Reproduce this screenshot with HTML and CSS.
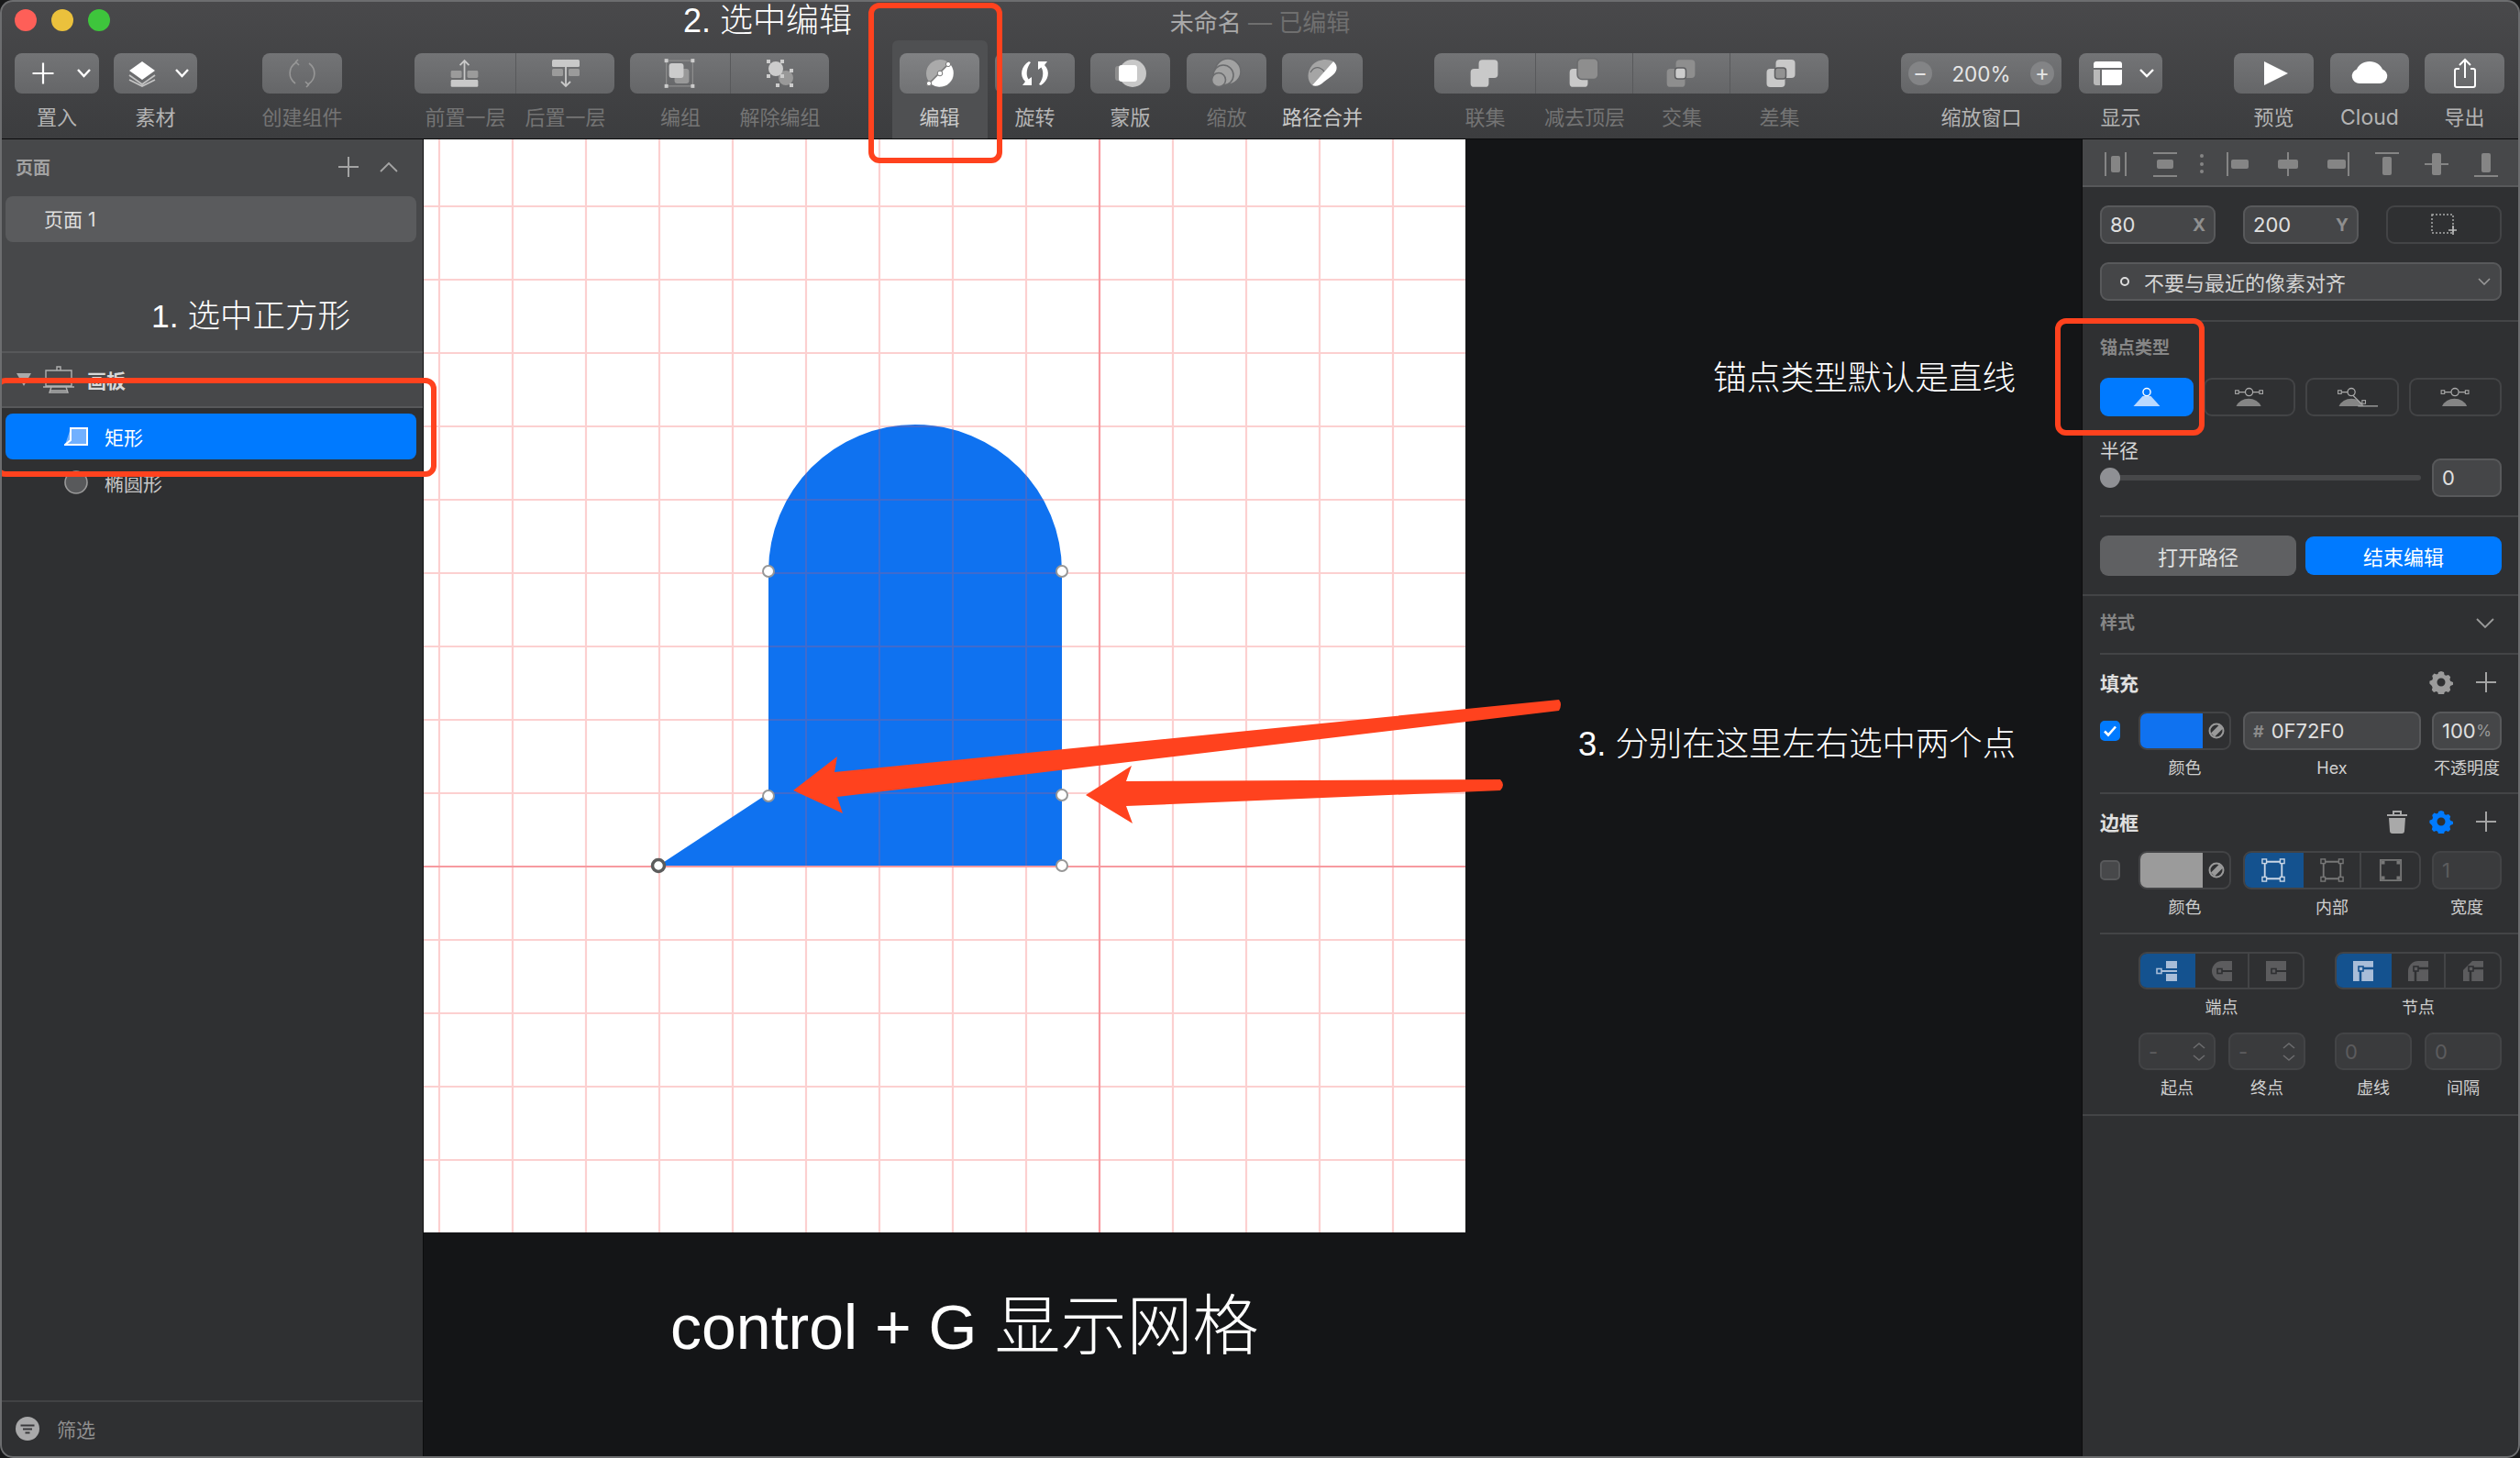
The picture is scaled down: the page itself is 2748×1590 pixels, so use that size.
FILE: index.html
```html
<!DOCTYPE html>
<html lang="zh-CN">
<head>
<meta charset="utf-8">
<title>未命名</title>
<link rel="stylesheet" href="styles.css">
</head>
<body>
<svg class="defs" aria-hidden="true">
  <symbol id="plus" viewBox="0 0 24 24"><path d="M12 1v22M1 12h22" fill="none" stroke="currentColor" stroke-width="2"/></symbol>
  <symbol id="gear" viewBox="0 0 26 26"><g fill="currentColor"><path fill-rule="evenodd" d="M13 1l3 1 .6 2.9 1.6.9 2.8-.9 2.2 2.4-.8 2.7.7 1.7 2.9 1.3v2.8l-2.9 1.3-.7 1.7.8 2.7-2.2 2.4-2.8-.9-1.6.9-.6 2.9-3 1-3-1-.6-2.9-1.6-.9-2.8.9-2.2-2.4.8-2.7-.7-1.7L.4 14.5v-2.8l2.9-1.3.7-1.7-.8-2.7 2.2-2.4 2.8.9 1.6-.9L10 2zM13 8.500a4.500 4.500 0 1 0 0 9 4.500 4.500 0 0 0 0-9z"/></g></symbol>
  <symbol id="swap" viewBox="0 0 20 20"><circle cx="10" cy="10" r="7.500" fill="none" stroke="#9a9a9a" stroke-width="2"/><path d="M4 12.500 13 3.500 17 7.500 8 16.500z" fill="#9a9a9a"/></symbol>
  <clipPath id="shape-clip"><path d="M718 944 838 865V623A160 160 0 0 1 1158 623V944Z"/></clipPath>
</svg>

<div class="window">
  <header class="toolbar">
    <div class="titlebar">
      <div class="lights"><span class="light red"></span><span class="light yellow"></span><span class="light green"></span></div>
      <div class="doc-title">未命名 <span class="doc-state">— 已编辑</span></div>
      <div></div>
    </div>
    <div class="tools">
      <div class="tool t-place"><div class="btn"><svg viewBox="0 0 92 44"><path d="M31 10.500v23M19.500 22h23" stroke="#fff" stroke-width="2.200" fill="none"/><path d="M69 18l6.500 7 6.500-7" stroke="#fff" stroke-width="2.400" fill="none"/></svg></div><span class="lbl on">置入</span></div>
      <div class="tool t-asset"><div class="btn"><svg viewBox="0 0 91 44"><path d="M31 9l14 10-14 10-14-10z" fill="#fff"/><path d="M17 24l14 10 14-10M17 29l14 7 14-7" stroke="#c4c4c4" stroke-width="1.800" fill="none"/><path d="M68 18l6.500 7 6.500-7" stroke="#fff" stroke-width="2.400" fill="none"/></svg></div><span class="lbl on">素材</span></div>
      <div class="tool t-create"><div class="btn"><svg viewBox="0 0 87 44"><g fill="none" stroke="#979797" stroke-width="1.600"><path d="M36 33C28 27 28 16 37 10M36 10l3-3M37 10l3 3"/><path d="M51 11C59 17 59 28 50 34M51 34l-3 3M50 34l-3-3"/></g></svg></div><span class="lbl off">创建组件</span></div>

      <div class="tool t-front seg-l"><div class="btn"><svg viewBox="0 0 111 44"><path d="M55 29V8M50 13l5-5 5 5" stroke="#c9c9c9" stroke-width="1.800" fill="none"/><rect x="40" y="19" width="12" height="8" rx="1.500" fill="#9b9b9b"/><rect x="58" y="19" width="12" height="8" rx="1.500" fill="#9b9b9b"/><rect x="40" y="29" width="30" height="8" rx="1.500" fill="#c9c9c9"/></svg></div><span class="lbl off">前置一层</span></div>
      <div class="tool t-back seg-r"><div class="btn"><svg viewBox="0 0 107 44"><rect x="39" y="7" width="30" height="8" rx="1.500" fill="#c9c9c9"/><rect x="39" y="17" width="12" height="8" rx="1.500" fill="#9b9b9b"/><rect x="57" y="17" width="12" height="8" rx="1.500" fill="#9b9b9b"/><path d="M54 15v21M49 31l5 5 5-5" stroke="#c9c9c9" stroke-width="1.800" fill="none"/></svg></div><span class="lbl off">后置一层</span></div>

      <div class="tool t-group seg-l"><div class="btn"><svg viewBox="0 0 110 44"><rect x="40" y="8" width="29" height="28" fill="none" stroke="#8f8f8f" stroke-width="1.200"/><rect x="49" y="17" width="16" height="16" rx="3" fill="#999"/><rect x="43" y="11" width="16" height="16" rx="3" fill="#ccc"/><g fill="#ccc"><rect x="38" y="6" width="4" height="4"/><rect x="67" y="6" width="4" height="4"/><rect x="38" y="34" width="4" height="4"/><rect x="67" y="34" width="4" height="4"/></g></svg></div><span class="lbl off">编组</span></div>
      <div class="tool t-ungroup seg-r"><div class="btn"><svg viewBox="0 0 107 44"><circle cx="60" cy="27" r="8" fill="#999"/><circle cx="49" cy="17" r="8" fill="#ccc"/><g fill="#ccc"><rect x="39" y="7" width="4" height="4"/><rect x="54" y="7" width="4" height="4"/><rect x="39" y="23" width="4" height="4"/><rect x="54" y="23" width="4" height="4"/><rect x="64" y="17" width="4" height="4"/><rect x="49" y="33" width="4" height="4"/><rect x="64" y="33" width="4" height="4"/></g></svg></div><span class="lbl off">解除编组</span></div>

      <div class="tool t-edit"><div class="btn btn-lit"><svg viewBox="0 0 87 44"><circle cx="44" cy="22" r="15" fill="#aaa"/><path d="M54.600 11.400A15 15 0 0 1 33.400 32.600z" fill="#fff"/><path d="M32 33 53 12" stroke="#777" stroke-width="1.400"/><g fill="#fff" stroke="#777"><circle cx="32" cy="33" r="2.600"/><circle cx="53" cy="12" r="2.600"/><circle cx="44" cy="22" r="2.800"/></g></svg></div><span class="lbl bright">编辑</span></div>
      <div class="tool t-rotate"><div class="btn"><svg viewBox="0 0 87 44"><g fill="#fff"><path d="M37 9C29 14 26 24 33 31L30 35H40V26L36.500 28.500C33 23 35 15 39 10z"/><path d="M50 35C58 30 61 20 54 13L57 9H47V18L50.500 15.500C54 21 52 29 48 34z"/></g></svg></div><span class="lbl on">旋转</span></div>
      <div class="tool t-mask"><div class="btn"><svg viewBox="0 0 87 44"><rect x="27" y="14" width="14" height="16" rx="3" fill="#8e8e8e"/><circle cx="46" cy="22" r="15" fill="#c8c8c8"/><rect x="31" y="13" width="20" height="18" rx="3" fill="#fff"/></svg></div><span class="lbl on">蒙版</span></div>
      <div class="tool t-scale"><div class="btn"><svg viewBox="0 0 87 44"><g fill="#a2a2a2" stroke="#6a6b6d" stroke-width="1.600"><circle cx="45" cy="20" r="14"/><circle cx="40" cy="24" r="11"/><circle cx="35" cy="29" r="7.500"/></g></svg></div><span class="lbl off">缩放</span></div>
      <div class="tool t-merge"><div class="btn"><svg viewBox="0 0 88 44"><path d="M33 35C27 30 27 20 33 13 38 7 49 5 56 9z" fill="#a5a5a5"/><path d="M33 35 56 9C62 14 60 21 54 25L46 31C42 35 37 37 33 35z" fill="#fff"/><path d="M31 21C35 14 41 14 46 20" fill="none" stroke="#6a6b6d" stroke-width="1.200"/></svg></div><span class="lbl bright">路径合并</span></div>

      <div class="tool t-union seg-l"><div class="btn"><svg viewBox="0 0 111 44"><rect x="49" y="7" width="21" height="20" rx="4" fill="#c9c9c9"/><rect x="40" y="17" width="20" height="20" rx="4" fill="#c9c9c9"/></svg></div><span class="lbl off">联集</span></div>
      <div class="tool t-subtract seg-m"><div class="btn"><svg viewBox="0 0 106 44"><rect x="37" y="17" width="20" height="20" rx="4" fill="#c9c9c9"/><rect x="45.500" y="5.500" width="23" height="23" rx="5" fill="#8e8e8e" stroke="#6a6b6d" stroke-width="1.500"/></svg></div><span class="lbl off">减去顶层</span></div>
      <div class="tool t-intersect seg-m"><div class="btn"><svg viewBox="0 0 106 44"><rect x="47" y="7" width="21" height="20" rx="4" fill="#8e8e8e"/><rect x="37" y="17" width="20" height="20" rx="4" fill="#8e8e8e"/><rect x="46" y="16" width="12" height="12" rx="3" fill="#ccc" stroke="#5d5e60" stroke-width="1.500"/></svg></div><span class="lbl off">交集</span></div>
      <div class="tool t-difference seg-r"><div class="btn"><svg viewBox="0 0 106 44"><rect x="49" y="7" width="21" height="20" rx="4" fill="#c9c9c9"/><rect x="39" y="17" width="20" height="20" rx="4" fill="#c9c9c9"/><rect x="48" y="16" width="12" height="12" rx="3" fill="#929292" stroke="#5d5e60" stroke-width="1.500"/></svg></div><span class="lbl off">差集</span></div>

      <div class="tool t-zoom"><div class="btn zoom-btn"><span class="zoom-round">−</span><span class="zoom-val">200%</span><span class="zoom-round">+</span></div><span class="lbl on">缩放窗口</span></div>
      <div class="tool t-show"><div class="btn"><svg viewBox="0 0 91 44"><path d="M16 12a3 3 0 0 1 3-3h25a3 3 0 0 1 3 3v4H16z" fill="#fff"/><path d="M16 18h7v17h-4a3 3 0 0 1-3-3z" fill="#b9b9b9"/><path d="M25 18h22v14a3 3 0 0 1-3 3H25z" fill="#fff"/><path d="M67 18l7 7 7-7" stroke="#fff" stroke-width="2.400" fill="none"/></svg></div><span class="lbl on">显示</span></div>
      <div class="tool t-preview"><div class="btn"><svg viewBox="0 0 87 44"><path d="M33 9l26 13-26 13z" fill="#fff"/></svg></div><span class="lbl on">预览</span></div>
      <div class="tool t-cloud"><div class="btn"><svg viewBox="0 0 86 44"><path d="M32 33a8 8 0 0 1-3-15.500C31 13 36 9 43 9s12 4 14 8.500A8 8 0 0 1 54 33z" fill="#fff"/></svg></div><span class="lbl on latin">Cloud</span></div>
      <div class="tool t-export"><div class="btn"><svg viewBox="0 0 87 44"><path d="M38 17h-3a2 2 0 0 0-2 2v16a2 2 0 0 0 2 2h18a2 2 0 0 0 2-2V19a2 2 0 0 0-2-2h-3M44 27V7M38 13l6-6 6 6" fill="none" stroke="#fff" stroke-width="2"/></svg></div><span class="lbl on">导出</span></div>
    </div>
  </header>

  <main class="workspace">
    <aside class="layers">
      <div class="pages">
        <div class="pages-head"><span class="section-name">页面</span>
          <div class="pages-actions"><svg class="ic-plus"><use href="#plus"/></svg><svg class="ic-up" viewBox="0 0 20 12"><path d="M1 11l9-9 9 9" fill="none" stroke="currentColor" stroke-width="1.800"/></svg></div>
        </div>
        <div class="page-row">页面 1</div>
      </div>
      <div class="artboard-row">
        <svg class="caret" viewBox="0 0 16 14"><path d="M0 0h16L8 14z" fill="#aaa"/></svg>
        <svg class="board-ic" viewBox="0 0 34 30"><path d="M3 5h28v17H3zM15 5V1h4v4M0 23h34M9 23l-2 6h20l-2-6M8 27h18" fill="none" stroke="#b0b0b0" stroke-width="1.400"/></svg>
        <span class="board-name">画板</span>
      </div>
      <div class="layer-list">
        <div class="layer layer-on">
          <svg class="layer-ic" viewBox="0 0 26 20"><path d="M7 1h18v18H1z" fill="#71b0ff"/><path d="M1 19h24V1H7v13L1 19z" fill="none" stroke="#fff" stroke-width="2"/></svg>
          <span>矩形</span>
        </div>
        <div class="layer">
          <svg class="layer-ic layer-ic-round" viewBox="0 0 26 26"><circle cx="13" cy="13" r="12" fill="#58595b" stroke="#9a9a9a" stroke-width="1.600"/></svg>
          <span class="layer-name">椭圆形</span>
        </div>
      </div>
      <div class="layers-foot">
        <svg class="filter-ic" viewBox="0 0 26 26"><circle cx="13" cy="13" r="13" fill="#a9a9aa"/><path d="M5.500 9.500h15M8 13.500h10M10.500 17.500h5" stroke="#3a3a3c" stroke-width="2"/></svg>
        <span>筛选</span>
      </div>
    </aside>

    <section class="stage">
      <svg class="artboard" viewBox="462 152 1136 1192">
        <rect x="462" y="152" width="1136" height="1192" fill="#fff"/>
        <path class="grid-line" d="M479 152V1344M559 152V1344M639 152V1344M719 152V1344M799 152V1344M879 152V1344M959 152V1344M1039 152V1344M1119 152V1344M1279 152V1344M1359 152V1344M1439 152V1344M1519 152V1344M462 225H1598M462 305H1598M462 385H1598M462 465H1598M462 545H1598M462 625H1598M462 705H1598M462 785H1598M462 865H1598M462 1025H1598M462 1105H1598M462 1185H1598M462 1265H1598"/>
        <path class="grid-main" d="M1199 152V1344M462 945H1598"/>
        <path d="M718 944 838 865V623A160 160 0 0 1 1158 623V944Z" fill="#0f72f0"/>
        <path class="grid-over" clip-path="url(#shape-clip)" d="M879 152V1344M959 152V1344M1039 152V1344M1119 152V1344M462 465H1598M462 545H1598M462 625H1598M462 705H1598M462 785H1598M462 865H1598"/>
        <g class="handle"><ellipse cx="838" cy="623" rx="6" ry="6"/><ellipse cx="1158" cy="623" rx="6" ry="6"/><ellipse cx="838" cy="868" rx="6" ry="6"/><ellipse cx="1158" cy="867" rx="6" ry="6"/><ellipse cx="1158" cy="944" rx="6" ry="6"/></g>
        <circle class="handle-on" cx="718" cy="944" r="6.500"/>
      </svg>
      <p class="caption">control + G <span class="caption-cjk">显示网格</span></p>
    </section>

    <aside class="inspector">
      <div class="align-bar">
        <svg viewBox="0 0 478 51"><g fill="#858585">
          <rect x="25" y="14" width="2" height="26"/><rect x="47" y="14" width="2" height="26"/><rect x="32" y="18" width="10" height="18" rx="2"/>
          <rect x="78" y="14" width="26" height="2"/><rect x="78" y="39" width="26" height="2"/><rect x="82" y="22" width="18" height="10" rx="2"/>
          <circle cx="131" cy="18" r="2"/><circle cx="131" cy="27" r="2"/><circle cx="131" cy="35" r="2"/>
          <rect x="158" y="14" width="2" height="26"/><rect x="163" y="22" width="19" height="10" rx="2"/>
          <rect x="224" y="14" width="2" height="26"/><rect x="214" y="22" width="22" height="10" rx="2"/>
          <rect x="290" y="14" width="2" height="26"/><rect x="268" y="22" width="20" height="10" rx="2"/>
          <rect x="320" y="14" width="26" height="2"/><rect x="328" y="19" width="10" height="20" rx="2"/>
          <rect x="374" y="26" width="26" height="2"/><rect x="382" y="15" width="10" height="24" rx="2"/>
          <rect x="428" y="39" width="26" height="2"/><rect x="436" y="15" width="10" height="21" rx="2"/>
        </g></svg>
      </div>
      <div class="insp-body">
        <div class="xy-row">
          <div class="field"><span class="val">80</span><span class="unit">X</span></div>
          <div class="field"><span class="val">200</span><span class="unit">Y</span></div>
          <div class="field field-ghost"><svg class="pixel-ic" viewBox="0 0 28 24"><rect x="1" y="1" width="23" height="20" fill="none" stroke="#aaa" stroke-width="1.500" stroke-dasharray="2 2"/><path d="M24 13v10M19 18h9" stroke="#bbb" stroke-width="1.600"/></svg></div>
        </div>
        <div class="select"><span class="sel-dot"></span><span class="sel-text">不要与最近的像素对齐</span><svg class="sel-chev" viewBox="0 0 14 8"><path d="M1 1l6 6 6-6" fill="none" stroke="#999" stroke-width="1.600"/></svg></div>
        <div class="rule after-select"></div>
        <div class="insp-title anchor-title">锚点类型</div>
        <div class="anchor-row">
          <div class="anchor anchor-on"><svg viewBox="0 0 102 42"><circle cx="51" cy="15" r="4.500" fill="none" stroke="#fff" stroke-width="1.600"/><path d="M35 32l11-12h10l11 12z" fill="#b9d9ff"/></svg></div>
          <div class="anchor"><svg viewBox="0 0 100 42"><path d="M34 32a16 14 0 0 1 30 0z" fill="#858585"/><path d="M37 15h8M54 15h8" stroke="#aaa" stroke-width="1.400"/><circle cx="49.500" cy="15" r="4.500" fill="#2f3032" stroke="#aaa" stroke-width="1.400"/><rect x="33" y="13" width="4" height="4" fill="none" stroke="#aaa" stroke-width="1.200"/><rect x="62" y="13" width="4" height="4" fill="none" stroke="#aaa" stroke-width="1.200"/></svg></div>
          <div class="anchor"><svg viewBox="0 0 102 42"><path d="M35 32a16 14 0 0 1 30 0z" fill="#858585"/><path d="M38 15h8M52 19l11 11M58 32h24" stroke="#aaa" stroke-width="1.400"/><circle cx="50" cy="15" r="4.500" fill="#2f3032" stroke="#aaa" stroke-width="1.400"/><rect x="34" y="13" width="4" height="4" fill="none" stroke="#aaa" stroke-width="1.200"/><rect x="63" y="25" width="4" height="4" fill="none" stroke="#aaa" stroke-width="1.200"/></svg></div>
          <div class="anchor"><svg viewBox="0 0 102 42"><path d="M35 32a16 14 0 0 1 30 0z" fill="#858585"/><path d="M38 15h8M55 15h8" stroke="#aaa" stroke-width="1.400"/><circle cx="50.500" cy="15" r="4.500" fill="#2f3032" stroke="#aaa" stroke-width="1.400"/><rect x="34" y="13" width="4" height="4" fill="none" stroke="#aaa" stroke-width="1.200"/><rect x="63" y="13" width="4" height="4" fill="none" stroke="#aaa" stroke-width="1.200"/></svg></div>
        </div>
        <div class="radius-title">半径</div>
        <div class="slider-row">
          <div class="slider"><span class="slider-thumb"></span></div>
          <div class="field field-num"><span class="val">0</span></div>
        </div>
        <div class="rule after-slider"></div>
        <div class="action-row"><div class="action action-gray">打开路径</div><div class="action action-blue">结束编辑</div></div>
      </div>
      <div class="rule-full"></div>
      <div class="insp-body">
        <div class="style-head"><span class="insp-title">样式</span><svg class="style-chev" viewBox="0 0 20 12"><path d="M1 1l9 9 9-9" fill="none" stroke="#9a9a9a" stroke-width="1.800"/></svg></div>
        <div class="rule"></div>

        <div class="prop-head"><span class="prop-title">填充</span><div class="prop-actions"><svg class="ic-gear"><use href="#gear"/></svg><svg class="ic-plus"><use href="#plus"/></svg></div></div>
        <div class="prop-grid">
          <span class="check check-on"><svg viewBox="0 0 22 22"><path d="M5 11.500l4 4 8-9" fill="none" stroke="#fff" stroke-width="2.600"/></svg></span>
          <div class="swatch"><span class="swatch-color swatch-blue"></span><svg class="swap"><use href="#swap"/></svg></div>
          <div class="field field-hex"><span class="hash">#</span><span class="val">0F72F0</span></div>
          <div class="field field-num"><span class="val">100</span><span class="pct">%</span></div>
          <span></span><span class="cap cap-a">颜色</span><span class="cap cap-b latin">Hex</span><span class="cap cap-c">不透明度</span>
        </div>
        <div class="rule after-fill"></div>

        <div class="prop-head"><span class="prop-title">边框</span><div class="prop-actions"><svg class="ic-trash" viewBox="0 0 22 26"><path d="M0 6h22" stroke="#a9a9a9" stroke-width="2"/><path d="M7 5V2h8v3" fill="none" stroke="#a9a9a9" stroke-width="2"/><path d="M2 9h18l-1 14a3 3 0 0 1-3 3H6a3 3 0 0 1-3-3z" fill="#a9a9a9"/></svg><svg class="ic-gear ic-blue"><use href="#gear"/></svg><svg class="ic-plus"><use href="#plus"/></svg></div></div>
        <div class="prop-grid">
          <span class="check"></span>
          <div class="swatch"><span class="swatch-color swatch-gray"></span><svg class="swap"><use href="#swap"/></svg></div>
          <div class="segs segs-pos">
            <span class="seg seg-on"><svg viewBox="0 0 28 28"><path d="M4 4h20v20H4z" fill="none" stroke="#c9d6e6" stroke-width="2"/><g fill="#14528f" stroke="#c9d6e6" stroke-width="1.500"><rect x="1" y="1" width="5" height="5"/><rect x="22" y="1" width="5" height="5"/><rect x="1" y="22" width="5" height="5"/><rect x="22" y="22" width="5" height="5"/></g></svg></span>
            <span class="seg"><svg viewBox="0 0 28 28"><path d="M4 4h20v20H4z" fill="none" stroke="#777" stroke-width="2"/><g fill="#2f3032" stroke="#777" stroke-width="1.500"><rect x="1" y="1" width="5" height="5"/><rect x="22" y="1" width="5" height="5"/><rect x="1" y="22" width="5" height="5"/><rect x="22" y="22" width="5" height="5"/></g></svg></span>
            <span class="seg"><svg viewBox="0 0 28 28"><path d="M2 2h24v24H2z" fill="none" stroke="#777" stroke-width="2"/><g fill="#777"><rect x="3" y="3" width="4" height="4"/><rect x="21" y="3" width="4" height="4"/><rect x="3" y="21" width="4" height="4"/><rect x="21" y="21" width="4" height="4"/></g></svg></span>
          </div>
          <div class="field field-num field-off"><span class="val">1</span></div>
          <span></span><span class="cap cap-a">颜色</span><span class="cap cap-b">内部</span><span class="cap cap-c">宽度</span>
        </div>
        <div class="rule after-border"></div>

        <div class="line-row">
          <div>
            <div class="segs segs-ends">
              <span class="seg seg-on"><svg viewBox="0 0 24 24"><path d="M11 1h12v8H11zM11 15h12v8H11z" fill="#a8bdd8"/><path d="M5 12h18" stroke="#a8bdd8" stroke-width="2"/><rect x="1" y="9.500" width="5" height="5" fill="#14528f" stroke="#a8bdd8" stroke-width="1.600"/></svg></span>
              <span class="seg"><svg viewBox="0 0 24 24"><path d="M23 1H12a11 11 0 0 0 0 22h11z" fill="#5c5c5e"/><path d="M11 12h12" stroke="#2f3032" stroke-width="2"/><rect x="7" y="9.500" width="5" height="5" fill="#5c5c5e" stroke="#2f3032" stroke-width="1.600"/></svg></span>
              <span class="seg"><svg viewBox="0 0 24 24"><path d="M1 1h22v22H1z" fill="#5c5c5e"/><path d="M11 12h12" stroke="#2f3032" stroke-width="2"/><rect x="7" y="9.500" width="5" height="5" fill="#5c5c5e" stroke="#2f3032" stroke-width="1.600"/></svg></span>
            </div>
            <div class="cap cap-line">端点</div>
          </div>
          <div>
            <div class="segs segs-joins">
              <span class="seg seg-on"><svg viewBox="0 0 24 24"><path d="M1 1h22v22H1z" fill="#a8bdd8"/><path d="M11 9h12M9 12v11" stroke="#14528f" stroke-width="2.500"/><rect x="7" y="7" width="5" height="5" fill="#a8bdd8" stroke="#14528f" stroke-width="1.600"/></svg></span>
              <span class="seg"><svg viewBox="0 0 24 24"><path d="M1 23V12A11 11 0 0 1 12 1h11v22z" fill="#5c5c5e"/><path d="M11 9h12M9 12v11" stroke="#2f3032" stroke-width="2.500"/><rect x="7" y="7" width="5" height="5" fill="#5c5c5e" stroke="#2f3032" stroke-width="1.600"/></svg></span>
              <span class="seg"><svg viewBox="0 0 24 24"><path d="M1 23V11L11 1h12v22z" fill="#5c5c5e"/><path d="M11 9h12M9 12v11" stroke="#2f3032" stroke-width="2.500"/><rect x="7" y="7" width="5" height="5" fill="#5c5c5e" stroke="#2f3032" stroke-width="1.600"/></svg></span>
            </div>
            <div class="cap cap-line">节点</div>
          </div>
        </div>
        <div class="stepper-row">
          <div class="stepper-col"><div class="field field-off"><span class="val">-</span><svg class="updown" viewBox="0 0 14 22"><path d="M1 7l6-5 6 5M1 15l6 5 6-5" fill="none" stroke="#6c6c6e" stroke-width="1.600"/></svg></div><span class="cap">起点</span></div>
          <div class="stepper-col stepper-b"><div class="field field-off"><span class="val">-</span><svg class="updown" viewBox="0 0 14 22"><path d="M1 7l6-5 6 5M1 15l6 5 6-5" fill="none" stroke="#6c6c6e" stroke-width="1.600"/></svg></div><span class="cap">终点</span></div>
          <div class="stepper-col stepper-c"><div class="field field-off"><span class="val">0</span></div><span class="cap">虚线</span></div>
          <div class="stepper-col stepper-b"><div class="field field-off"><span class="val">0</span></div><span class="cap">间隔</span></div>
        </div>
      </div>
      <div class="rule-full rule-end"></div>
    </aside>
  </main>

  <div class="callout callout-1">1. 选中正方形</div>
  <div class="callout callout-2">2. 选中编辑</div>
  <div class="callout callout-3">3. 分别在这里左右选中两个点</div>
  <div class="callout callout-4">锚点类型默认是直线</div>
  <span class="mark mark-edit"></span>
  <span class="mark mark-layer"></span>
  <span class="mark mark-anchor"></span>
  <svg class="arrows" viewBox="0 0 2748 1590">
    <path d="M865 862 913 825 910 842 1700 763Q1704 768 1700 775L913 869 919 887Z" fill="#ff421e"/>
    <path d="M1184 867 1234 835 1228 852 1636 850Q1642 856 1636 862L1228 879 1235 898Z" fill="#ff421e"/>
  </svg>
</div>
</body>
</html>
```

FILE: styles.css
```css
* { box-sizing: border-box; }
html, body { margin: 0; padding: 0; }
body {
  width: 2748px;
  height: 1590px;
  overflow: hidden;
  background: #18191a;
  font-family: "Inter", "Noto Sans CJK SC", sans-serif;
  color: #d0d0d0;
}
.defs { position: absolute; width: 0; height: 0; }
.latin { font-family: "Inter", "Noto Sans", sans-serif; }

.window {
  position: relative;
  width: 2748px;
  height: 1590px;
  display: flex;
  flex-direction: column;
  border-radius: 14px;
  overflow: hidden;
}
.window::after {
  content: "";
  position: absolute;
  inset: 0;
  border: 2px solid #6c6d6f;
  border-radius: 14px;
  pointer-events: none;
}

/* toolbar */
.toolbar {
  height: 152px;
  flex: none;
  background: linear-gradient(#49494b, #3c3d3f);
  border-bottom: 1px solid #0c0c0d;
}
.titlebar {
  height: 44px;
  display: grid;
  grid-template-columns: 1fr auto 1fr;
  align-items: center;
}
.lights { display: flex; gap: 16px; padding-left: 16px; }
.light { width: 24px; height: 24px; border-radius: 50%; }
.red { background: #fe5f58; }
.yellow { background: #ebc13c; }
.green { background: #3ec53c; }
.doc-title { font-size: 26px; color: #a9a9a9; }
.doc-state { color: #6f6f6f; }
.tools { display: flex; height: 107px; }
.tool {
  flex: none;
  display: flex;
  flex-direction: column;
  align-items: center;
  padding-top: 14px;
}
.btn {
  width: 100%;
  height: 44px;
  flex: none;
  background: linear-gradient(#737476, #656668);
  border-radius: 8px;
}
.btn svg { display: block; width: 100%; height: 44px; }
.btn-lit { background: linear-gradient(#818284, #717274); }
.lbl { margin-top: 13px; line-height: 26px; font-size: 22px; white-space: nowrap; }
.lbl.on { color: #b4b4b4; }
.lbl.off { color: #747474; }
.lbl.bright { color: #c9c9c9; }
.lbl.latin { font-size: 23px; }
.seg-l .btn { border-radius: 8px 0 0 8px; border-right: 1px solid #58595b; }
.seg-m .btn { border-radius: 0; border-right: 1px solid #58595b; }
.seg-r .btn { border-radius: 0 8px 8px 0; }
.t-place { width: 92px; margin-left: 16px; }
.t-asset { width: 91px; margin-left: 16px; }
.t-create { width: 87px; margin-left: 71px; }
.t-front { width: 111px; margin-left: 79px; }
.t-back { width: 107px; }
.t-group { width: 110px; margin-left: 17px; }
.t-ungroup { width: 107px; }
.t-edit {
  width: 104px;
  margin-left: 69px;
  padding-left: 8px;
  padding-right: 9px;
  background: #4f5052;
  border-radius: 6px 6px 0 0;
}
.t-rotate { width: 87px; margin-left: 8px; }
.t-mask { width: 87px; margin-left: 17px; }
.t-scale { width: 87px; margin-left: 18px; }
.t-merge { width: 88px; margin-left: 17px; }
.t-union { width: 111px; margin-left: 78px; }
.t-subtract, .t-intersect, .t-difference { width: 106px; }
.t-difference { width: 107px; }
.t-zoom { width: 175px; margin-left: 79px; }
.t-show { width: 91px; margin-left: 19px; }
.t-preview { width: 87px; margin-left: 78px; }
.t-cloud { width: 86px; margin-left: 18px; }
.t-export { width: 87px; margin-left: 17px; }
.zoom-btn {
  display: flex;
  align-items: center;
  justify-content: space-between;
  padding: 0 8px;
}
.zoom-round {
  width: 26px;
  height: 26px;
  border-radius: 50%;
  background: #838486;
  color: #e4e4e4;
  font-size: 24px;
  line-height: 25px;
  text-align: center;
}
.zoom-val { font-size: 22.500px; color: #e6e6e6; }

/* workspace */
.workspace { flex: 1; min-height: 0; display: flex; }

/* layers */
.layers {
  width: 462px;
  flex: none;
  display: flex;
  flex-direction: column;
  background: #2f3032;
  border-right: 1px solid #0c0c0d;
}
.pages {
  height: 233px;
  padding: 0 7px 0 6px;
  background: #47484a;
  border-bottom: 2px solid #57585a;
}
.pages-head {
  height: 62px;
  padding: 0 20px 3px 11px;
  display: flex;
  align-items: center;
  justify-content: space-between;
}
.section-name { font-size: 19px; font-weight: 700; color: #a2a2a2; }
.pages-actions { display: flex; align-items: center; gap: 22px; color: #a4a4a4; }
.ic-plus { width: 24px; height: 24px; display: block; color: #a4a4a4; }
.ic-up { width: 20px; height: 12px; display: block; }
.page-row {
  height: 50px;
  padding-left: 42px;
  border-radius: 8px;
  background: #5a5b5d;
  font-size: 21px;
  line-height: 52px;
  color: #e0e0e0;
}
.artboard-row {
  height: 60px;
  display: flex;
  align-items: center;
  padding-left: 18px;
  background: #47484a;
  border-bottom: 2px solid #57585a;
}
.caret { width: 16px; height: 14px; flex: none; }
.board-ic { width: 34px; height: 30px; margin-left: 13px; flex: none; }
.board-name { margin-left: 14px; font-size: 21px; font-weight: 700; color: #d8d8d8; }
.layer-list { padding: 6px 7px 0 6px; }
.layer {
  height: 50px;
  display: flex;
  align-items: center;
  padding-left: 64px;
  font-size: 21px;
  color: #c8c8c8;
}
.layer-on { background: #007aff; border-radius: 8px; color: #fff; }
.layer-ic { width: 26px; height: 20px; margin-right: 18px; flex: none; }
.layer-ic-round { height: 26px; }
.layers-foot {
  margin-top: auto;
  height: 63px;
  display: flex;
  align-items: center;
  gap: 19px;
  padding: 0 0 4px 17px;
  border-top: 2px solid #414244;
  font-size: 21px;
  color: #8f8f8f;
}
.filter-ic { width: 26px; height: 26px; }

/* stage */
.stage { position: relative; flex: 1; background: #141517; overflow: hidden; }
.artboard { display: block; width: 1136px; height: 1192px; }
.grid-line { fill: none; stroke: #fcd0d0; stroke-width: 2.200; }
.grid-main { fill: none; stroke: #f79aa0; stroke-width: 2.200; }
.grid-over { fill: none; stroke: rgba(190, 90, 120, .28); stroke-width: 2; }
.handle ellipse { fill: #fff; stroke: #979797; stroke-width: 2; }
.handle-on { fill: #fff; stroke: #5c5c5c; stroke-width: 3.500; }
.caption {
  position: absolute;
  left: 269px;
  top: 1252px;
  margin: 0;
  font: 300 68px/84px "Liberation Sans", "Noto Sans CJK SC", sans-serif;
  color: #fff;
  white-space: nowrap;
}
.caption-cjk { font-size: 72px; }

/* inspector */
.inspector {
  width: 478px;
  flex: none;
  background: #2f3032;
  border-left: 1px solid #0c0c0d;
}
.align-bar {
  height: 52px;
  background: #47484a;
  border-bottom: 2px solid #57585a;
}
.align-bar svg { display: block; width: 478px; height: 51px; margin-left: -1px; }
.insp-body { padding: 0 20px 0 19px; }
.rule { height: 2px; margin-right: -20px; background: #434446; }
.rule-full { height: 2px; background: #434446; }
.xy-row { display: grid; grid-template-columns: repeat(3, 126px); gap: 30px; padding-top: 20px; }
.field {
  height: 42px;
  display: flex;
  align-items: center;
  justify-content: space-between;
  padding: 0 9px;
  background: #454648;
  border: 2px solid #58595b;
  border-radius: 9px;
  font-size: 22px;
  color: #e0e0e0;
}
.unit { font-size: 19px; font-weight: 700; color: #8f8f8f; }
.field-ghost { justify-content: center; background: #2f3032; border-color: #434446; }
.pixel-ic { width: 28px; height: 24px; }
.select {
  height: 42px;
  margin-top: 20px;
  display: flex;
  align-items: center;
  padding: 0 10px 0 20px;
  background: #454648;
  border: 2px solid #58595b;
  border-radius: 9px;
}
.sel-dot { width: 10px; height: 10px; border: 2px solid #ddd; border-radius: 50%; }
.sel-text { margin-left: 16px; font-size: 22px; color: #d4d4d4; }
.sel-chev { width: 14px; height: 8px; margin-left: auto; }
.after-select { margin-top: 21px; }
.insp-title { font-size: 19px; font-weight: 700; color: #868686; line-height: 26px; }
.anchor-title { margin-top: 16px; }
.anchor-row { display: grid; grid-template-columns: 102px 100px 102px 101px; gap: 11px; margin-top: 19px; }
.anchor { height: 42px; border: 2px solid #434446; border-radius: 9px; }
.anchor svg { display: block; width: 100%; height: 100%; }
.anchor-on { background: #007aff; border-color: #007aff; }
.radius-title { margin-top: 25px; font-size: 21px; line-height: 26px; color: #d4d4d4; }
.slider-row { display: flex; align-items: center; justify-content: space-between; margin-top: -5px; }
.slider { position: relative; width: 350px; height: 6px; background: #47484a; border-radius: 3px; }
.slider-thumb { position: absolute; left: 0; top: -8px; width: 22px; height: 22px; border-radius: 50%; background: #8f9094; }
.field-num { width: 76px; }
.after-slider { margin-top: 20px; }
.action-row { display: grid; grid-template-columns: 214px 214px; gap: 10px; margin-top: 20px; height: 44px; margin-bottom: 20px; }
.action { display: flex; align-items: center; justify-content: center; font-size: 22px; border-radius: 9px; color: #e0e0e0; }
.action-gray { background: #5f6062; }
.action-blue { background: #007aff; color: #fff; height: 42px; margin-top: 1px; }
.style-head { height: 62px; display: flex; align-items: center; justify-content: space-between; padding: 0 8px 2px 0; }
.style-chev { width: 20px; height: 12px; }
.prop-head { height: 62px; display: flex; align-items: center; justify-content: space-between; padding: 0 5px 2px 0; }
.prop-title { font-size: 21px; font-weight: 700; color: #e0e0e0; }
.prop-actions { display: flex; align-items: center; gap: 24px; }
.ic-gear { width: 26px; height: 26px; color: #9b9b9b; }
.ic-blue { color: #007aff; }
.ic-trash { width: 22px; height: 26px; }
.prop-grid {
  display: grid;
  grid-template-columns: 42px 114px 206px 76px;
  grid-template-rows: 42px 40px;
  align-items: center;
}
.check {
  width: 22px;
  height: 22px;
  border-radius: 5px;
  background: #47484a;
  border: 2px solid #58595b;
}
.check svg { display: block; width: 22px; height: 22px; margin: -2px; }
.check-on { background: #007aff; border-color: #007aff; }
.swatch {
  width: 101px;
  height: 42px;
  display: flex;
  align-items: center;
  background: #2f3032;
  border: 2px solid #434446;
  border-radius: 9px;
  overflow: hidden;
}
.swatch-color { width: 70px; height: 42px; margin: -2px 0 -2px -2px; flex: none; }
.swatch-blue { background: #0f72f0; }
.swatch-gray { background: #9b9b9b; }
.swap { width: 20px; height: 20px; margin-left: 5px; flex: none; }
.field-hex { width: 194px; justify-content: flex-start; gap: 8px; }
.hash { font-size: 18px; font-weight: 700; color: #8a8a8a; }
.pct { font-size: 17px; color: #9a9a9a; }
.cap { font-size: 18px; line-height: 24px; color: #cfcfcf; text-align: center; white-space: nowrap; display: block; }
.cap-a { width: 101px; }
.cap-b { width: 194px; }
.cap-c { width: 76px; }
.latin.cap { font-size: 18px; }
.after-fill { margin-top: 6px; }
.field-off { background: #3a3b3d; border-color: #434446; color: #5c5c5e; }
.segs {
  height: 42px;
  display: grid;
  border: 2px solid #434446;
  border-radius: 9px;
  overflow: hidden;
}
.segs-pos { width: 194px; grid-template-columns: 64px 63px 1fr; }
.segs-ends { width: 181px; grid-template-columns: 60px 59px 1fr; height: 41px; }
.segs-joins { width: 182px; grid-template-columns: 60px 59px 1fr; height: 41px; }
.seg {
  display: flex;
  align-items: center;
  justify-content: center;
  border-right: 2px solid #434446;
  margin: -2px 0;
}
.seg:first-child { margin-left: -2px; }
.seg:last-child { border-right: 0; }
.seg-on { background: #14528f; border-right: 0; }
.seg svg { width: 26px; height: 26px; }
.segs-ends svg, .segs-joins svg { width: 24px; height: 24px; }
.after-border { margin-top: 7px; }
.line-row { display: flex; gap: 33px; padding: 19px 0 0 42px; }
.cap-line { margin-top: 8px; }
.stepper-row { display: flex; padding: 15px 0 0 42px; }
.stepper-col { width: 84px; display: flex; flex-direction: column; gap: 8px; }
.stepper-col .field { height: 41px; }
.stepper-b { margin-left: 14px; }
.stepper-c { margin-left: 32px; }
.updown { width: 14px; height: 22px; }
.rule-end { margin-top: 16px; }

/* annotations */
.callout {
  position: absolute;
  font: 300 36px/48px "Liberation Sans", "Noto Sans CJK SC", sans-serif;
  color: #fff;
  white-space: nowrap;
}
.callout-1 { left: 165px; top: 321px; font-size: 35.500px; }
.callout-2 { left: 745px; top: -1px; }
.callout-3 { left: 1721px; top: 788px; font-size: 36.400px; }
.callout-4 { left: 1868px; top: 389px; font-size: 36.700px; }
.mark {
  position: absolute;
  border: 6px solid #ff421e;
  border-radius: 12px;
}
.mark-edit { left: 947px; top: 3px; width: 146px; height: 175px; }
.mark-layer { left: -6px; top: 412px; width: 482px; height: 108px; }
.mark-anchor { left: 2241px; top: 347px; width: 163px; height: 128px; }
.arrows { position: absolute; left: 0; top: 0; width: 2748px; height: 1590px; pointer-events: none; }
```
